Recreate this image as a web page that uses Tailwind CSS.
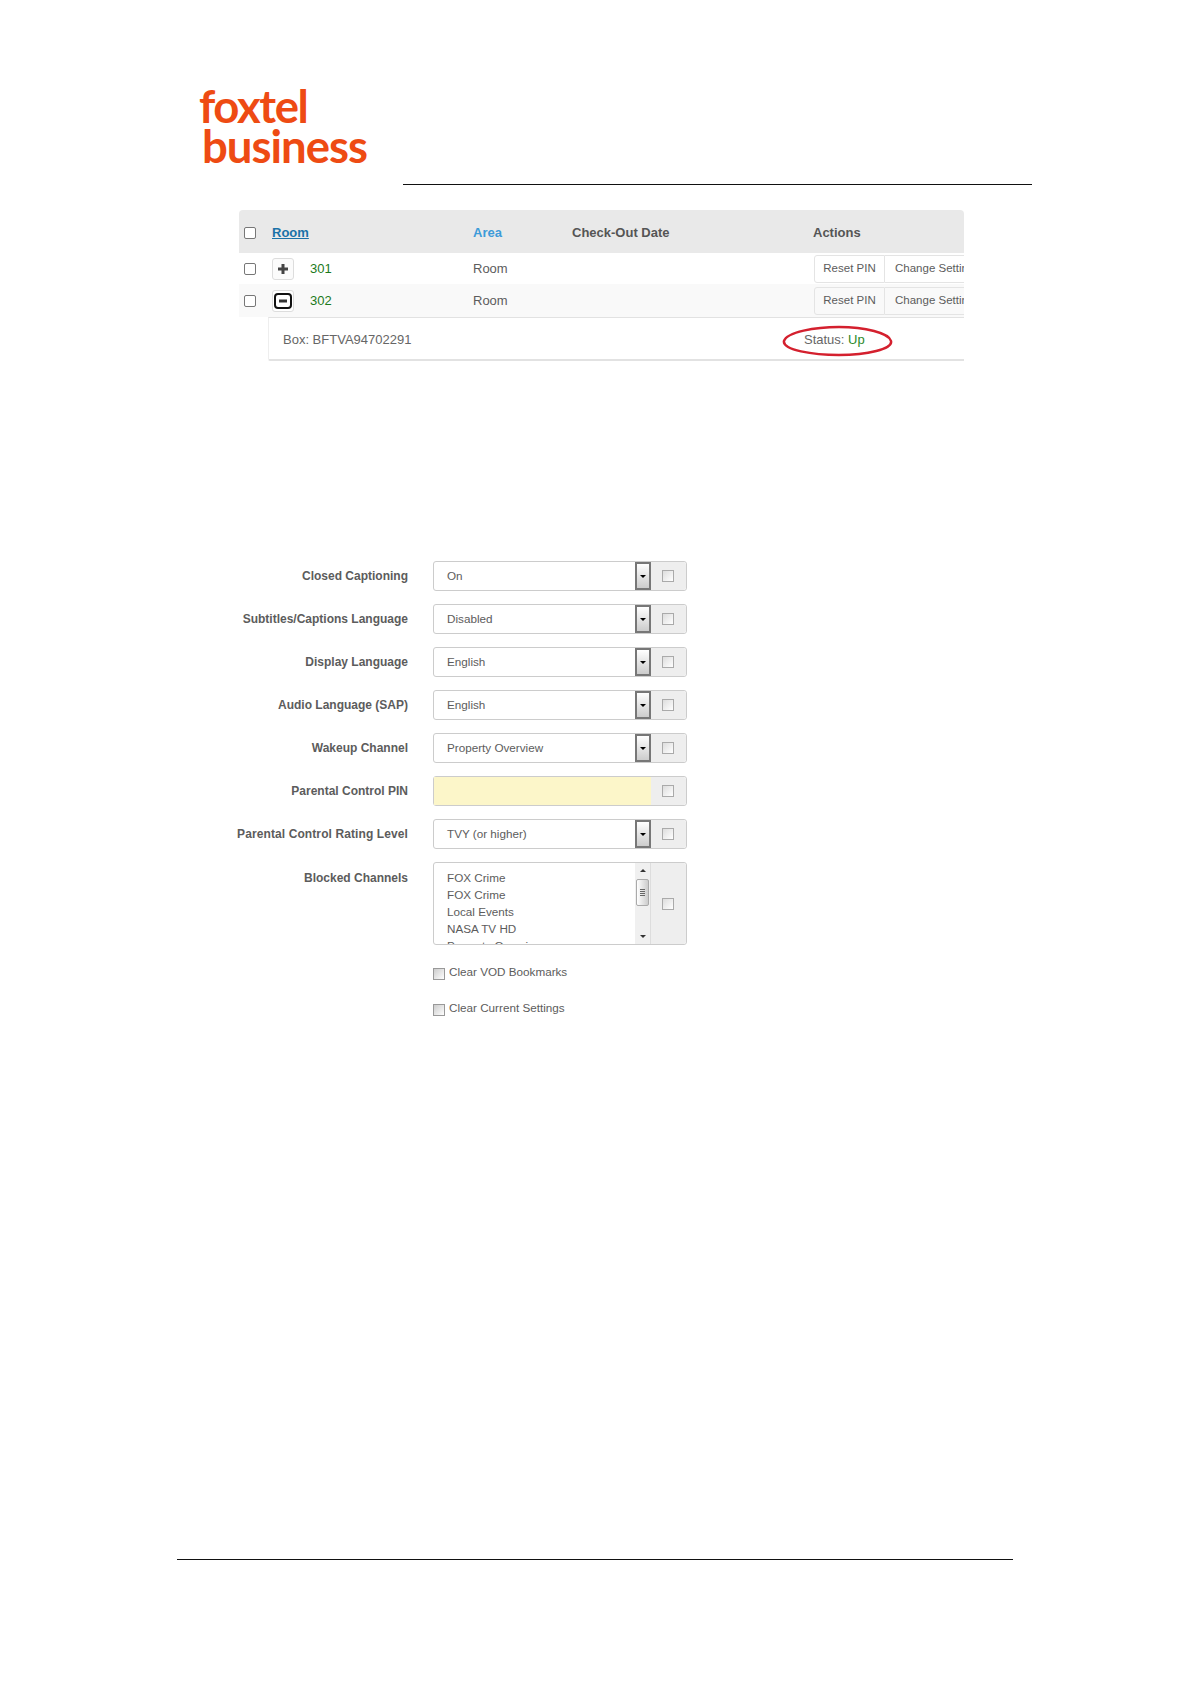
<!DOCTYPE html>
<html lang="en">
<head>
<meta charset="UTF-8">
<title>Foxtel Business</title>
<script src="https://cdn.jsdelivr.net/npm/@tailwindcss/browser@4"></script>
</head>
<body class="bg-white font-['Liberation_Sans',Arial,sans-serif] text-[#5c5c5c]">
<div class="w-[1190px] h-[1684px] overflow-hidden flex flex-col">

  <!-- header -->
  <div class="h-[185px] flex items-end">
    <div class="w-[403px] h-full pl-[199px] pt-[86px] font-['Lato',sans-serif] font-bold text-[#ee4b13] text-[45.5px] leading-[40px] tracking-[-1.4px]">
      <div>foxtel</div>
      <div class="pl-[3px] tracking-[-1px]">business</div>
    </div>
    <div class="w-[629px] h-px bg-[#111]"></div>
  </div>

  <!-- rooms table -->
  <div class="relative ml-[239px] mt-[25px] w-[725px] overflow-hidden text-[13px]">
    <div class="flex items-center h-[43px] pt-[2px] bg-[#e9e9e9] rounded-t font-bold">
      <span class="ml-[5px] w-[12px] h-[12px] shrink-0 border border-[#777] rounded-[2px] bg-white"></span>
      <a class="ml-[16px] w-[201px] shrink-0 text-[#1a72a8] underline">Room</a>
      <span class="w-[99px] shrink-0 text-[#3d9bd9]">Area</span>
      <span class="w-[241px] shrink-0 text-[#555]">Check-Out Date</span>
      <span class="text-[#555]">Actions</span>
    </div>

    <div class="flex items-center h-[31px]">
      <span class="ml-[5px] w-[12px] h-[12px] shrink-0 border border-[#777] rounded-[2px]"></span>
      <span class="ml-[16px] w-[22px] h-[22px] shrink-0 border border-[#ddd] rounded-[3px] flex items-center justify-center bg-[#fbfbfb]">
        <svg width="12" height="12" viewBox="0 0 12 12"><path d="M6 1v10M1 6h10" stroke="#444" stroke-width="3"/></svg>
      </span>
      <span class="ml-[16px] w-[163px] shrink-0 text-[#1c7a1c]">301</span>
      <span class="w-[340px] shrink-0">Room</span>
      <div class="flex ml-[1px] mt-[1px] h-[28px] w-[150px] shrink-0 text-[11.5px]">
        <span class="w-[71px] shrink-0 flex items-center justify-center border border-[#e4e4e4] rounded-l-[3px]">Reset PIN</span>
        <span class="pl-[10px] shrink-0 flex items-center border-y border-[#e4e4e4] whitespace-nowrap">Change Settings</span>
      </div>
    </div>

    <div class="flex items-center h-[33px] bg-[#f9f9f9]">
      <span class="ml-[5px] w-[12px] h-[12px] shrink-0 border border-[#777] rounded-[2px] bg-white"></span>
      <span class="ml-[16px] w-[22px] h-[22px] shrink-0 flex items-center justify-center rounded-[3px] border border-[#ddd] bg-white">
        <svg width="18" height="16" viewBox="0 0 18 16"><rect x="1" y="1" width="16" height="14" rx="3" fill="none" stroke="#111" stroke-width="2"/><path d="M5 8h8" stroke="#333" stroke-width="3"/></svg>
      </span>
      <span class="ml-[16px] w-[163px] shrink-0 text-[#1c7a1c]">302</span>
      <span class="w-[340px] shrink-0">Room</span>
      <div class="flex ml-[1px] mt-[1px] h-[28px] w-[150px] shrink-0 text-[11.5px]">
        <span class="w-[71px] shrink-0 flex items-center justify-center border border-[#e4e4e4] rounded-l-[3px]">Reset PIN</span>
        <span class="pl-[10px] shrink-0 flex items-center border-y border-[#e4e4e4] whitespace-nowrap">Change Settings</span>
      </div>
    </div>

    <div class="flex items-center ml-[29px] h-[44px] pt-[2px] bg-white border-t border-[#e2e2e2] border-b-2 border-b-[#e2e2e2] border-l border-l-[#eee] rounded-bl-[2px]">
      <span class="ml-[14px] w-[521px] shrink-0 text-[#666]">Box: BFTVA94702291</span>
      <span class="text-[#666]">Status: <span class="text-[#2b8a2b]">Up</span></span>
    </div>

    <!-- red hand drawn ring -->
    <svg class="absolute left-[542px] top-[115px]" width="112" height="32" viewBox="0 0 112 32" fill="none">
      <path d="M3 16C6 7 34 2 58 2c26 0 50 6 52 14 2 8-24 14-52 14C32 30 1 25 3 16Z" stroke="#d4202e" stroke-width="2.5"/>
    </svg>
  </div>

  <!-- settings form -->
  <div class="mt-[200px] ml-[225px] flex flex-col gap-[13px] text-[11.7px]">
    <div class="flex items-center h-[30px]">
      <label class="w-[183px] text-[12px] text-right font-bold">Closed Captioning</label>
      <div class="ml-[25px] w-[254px] h-full flex border border-[#ccc] rounded-[3px]">
        <span class="flex-1 pl-[13px] flex items-center">On</span>
        <span class="w-[16px] border-2 border-[#777] bg-gradient-to-b from-white to-[#ccc] flex items-center justify-center"><span class="border-x-[3px] border-x-transparent border-t-[3px] border-t-black"></span></span>
        <span class="w-[35px] pr-[2px] bg-[#eee] rounded-r-[3px] flex items-center justify-center"><span class="w-[12px] h-[12px] border border-[#aaa] bg-gradient-to-br from-[#ddd] to-white"></span></span>
      </div>
    </div>
    <div class="flex items-center h-[30px]">
      <label class="w-[183px] text-[12px] text-right font-bold">Subtitles/Captions Language</label>
      <div class="ml-[25px] w-[254px] h-full flex border border-[#ccc] rounded-[3px]">
        <span class="flex-1 pl-[13px] flex items-center">Disabled</span>
        <span class="w-[16px] border-2 border-[#777] bg-gradient-to-b from-white to-[#ccc] flex items-center justify-center"><span class="border-x-[3px] border-x-transparent border-t-[3px] border-t-black"></span></span>
        <span class="w-[35px] pr-[2px] bg-[#eee] rounded-r-[3px] flex items-center justify-center"><span class="w-[12px] h-[12px] border border-[#aaa] bg-gradient-to-br from-[#ddd] to-white"></span></span>
      </div>
    </div>
    <div class="flex items-center h-[30px]">
      <label class="w-[183px] text-[12px] text-right font-bold">Display Language</label>
      <div class="ml-[25px] w-[254px] h-full flex border border-[#ccc] rounded-[3px]">
        <span class="flex-1 pl-[13px] flex items-center">English</span>
        <span class="w-[16px] border-2 border-[#777] bg-gradient-to-b from-white to-[#ccc] flex items-center justify-center"><span class="border-x-[3px] border-x-transparent border-t-[3px] border-t-black"></span></span>
        <span class="w-[35px] pr-[2px] bg-[#eee] rounded-r-[3px] flex items-center justify-center"><span class="w-[12px] h-[12px] border border-[#aaa] bg-gradient-to-br from-[#ddd] to-white"></span></span>
      </div>
    </div>
    <div class="flex items-center h-[30px]">
      <label class="w-[183px] text-[12px] text-right font-bold">Audio Language (SAP)</label>
      <div class="ml-[25px] w-[254px] h-full flex border border-[#ccc] rounded-[3px]">
        <span class="flex-1 pl-[13px] flex items-center">English</span>
        <span class="w-[16px] border-2 border-[#777] bg-gradient-to-b from-white to-[#ccc] flex items-center justify-center"><span class="border-x-[3px] border-x-transparent border-t-[3px] border-t-black"></span></span>
        <span class="w-[35px] pr-[2px] bg-[#eee] rounded-r-[3px] flex items-center justify-center"><span class="w-[12px] h-[12px] border border-[#aaa] bg-gradient-to-br from-[#ddd] to-white"></span></span>
      </div>
    </div>
    <div class="flex items-center h-[30px]">
      <label class="w-[183px] text-[12px] text-right font-bold">Wakeup Channel</label>
      <div class="ml-[25px] w-[254px] h-full flex border border-[#ccc] rounded-[3px]">
        <span class="flex-1 pl-[13px] flex items-center">Property Overview</span>
        <span class="w-[16px] border-2 border-[#777] bg-gradient-to-b from-white to-[#ccc] flex items-center justify-center"><span class="border-x-[3px] border-x-transparent border-t-[3px] border-t-black"></span></span>
        <span class="w-[35px] pr-[2px] bg-[#eee] rounded-r-[3px] flex items-center justify-center"><span class="w-[12px] h-[12px] border border-[#aaa] bg-gradient-to-br from-[#ddd] to-white"></span></span>
      </div>
    </div>
    <div class="flex items-center h-[30px]">
      <label class="w-[183px] text-[12px] text-right font-bold">Parental Control PIN</label>
      <div class="ml-[25px] w-[254px] h-full flex border border-[#ccc] rounded-[3px]">
        <span class="flex-1 bg-[#fcf6c9]"></span>
        <span class="w-[35px] pr-[2px] bg-[#eee] rounded-r-[3px] flex items-center justify-center"><span class="w-[12px] h-[12px] border border-[#aaa] bg-gradient-to-br from-[#ddd] to-white"></span></span>
      </div>
    </div>
    <div class="flex items-center h-[30px]">
      <label class="w-[183px] text-[12px] text-right font-bold tracking-[0.1px]">Parental Control Rating Level</label>
      <div class="ml-[25px] w-[254px] h-full flex border border-[#ccc] rounded-[3px]">
        <span class="flex-1 pl-[13px] flex items-center">TVY (or higher)</span>
        <span class="w-[16px] border-2 border-[#777] bg-gradient-to-b from-white to-[#ccc] flex items-center justify-center"><span class="border-x-[3px] border-x-transparent border-t-[3px] border-t-black"></span></span>
        <span class="w-[35px] pr-[2px] bg-[#eee] rounded-r-[3px] flex items-center justify-center"><span class="w-[12px] h-[12px] border border-[#aaa] bg-gradient-to-br from-[#ddd] to-white"></span></span>
      </div>
    </div>
    <div class="flex items-start h-[83px]">
      <label class="w-[183px] mt-[7px] text-[12px] text-right font-bold">Blocked Channels</label>
      <div class="ml-[25px] w-[254px] h-full flex border border-[#ccc] rounded-[3px]">
        <div class="flex-1 h-full overflow-hidden pl-[13px] pt-[6px] leading-[17px]">
          <div>FOX Crime</div>
          <div>FOX Crime</div>
          <div>Local Events</div>
          <div>NASA TV HD</div>
          <div>Property Overview</div>
        </div>
        <div class="w-[15px] h-full bg-[#f0f0f0] flex flex-col items-center justify-between py-[6px]">
          <span class="border-x-[3px] border-x-transparent border-b-[3px] border-b-[#333]"></span>
          <span class="w-[13px] h-[27px] -mt-[22px] border border-[#aaa] rounded-[2px] bg-gradient-to-r from-white to-[#ccc] flex flex-col items-center justify-center gap-[1px]">
            <span class="w-[5px] h-px bg-[#666]"></span>
            <span class="w-[5px] h-px bg-[#666]"></span>
            <span class="w-[5px] h-px bg-[#666]"></span>
            <span class="w-[5px] h-px bg-[#666]"></span>
          </span>
          <span class="border-x-[3px] border-x-transparent border-t-[3px] border-t-[#333]"></span>
        </div>
        <span class="w-[36px] pr-[2px] bg-[#eee] border-l border-[#ddd] rounded-r-[3px] flex items-center justify-center"><span class="w-[12px] h-[12px] border border-[#aaa] bg-gradient-to-br from-[#ddd] to-white"></span></span>
      </div>
    </div>
    <div class="ml-[208px] mt-[5px] flex flex-col gap-[20px]">
      <div class="flex items-start gap-[4px] h-[16px]">
        <span class="mt-[5px] w-[12px] h-[12px] border border-[#999] bg-gradient-to-br from-[#ccc] to-white"></span>
        <span>Clear VOD Bookmarks</span>
      </div>
      <div class="flex items-start gap-[4px] h-[16px]">
        <span class="mt-[5px] w-[12px] h-[12px] border border-[#999] bg-gradient-to-br from-[#ccc] to-white"></span>
        <span>Clear Current Settings</span>
      </div>
    </div>
  </div>

  <!-- footer rule -->
  <div class="mt-auto mb-[124px] ml-[177px] w-[836px] h-px bg-[#111]"></div>
</div>
</body>
</html>
